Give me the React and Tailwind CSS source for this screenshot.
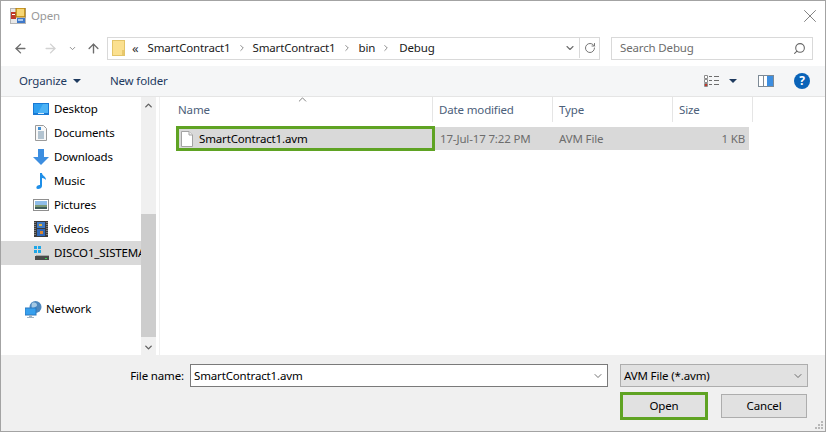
import React from "react";
import { ArrowLeft, ArrowRight, ArrowUp, ChevronDown, ChevronUp, ChevronRight, RotateCw, Search, X } from "lucide-react";

const AppIcon = () => (
	<svg width="16" height="16" viewBox="0 0 16 16" className="shrink-0">
		<rect x="0.5" y="0.5" width="15" height="15" fill="#e8e8e8" stroke="#b5b5b5" />
		<rect x="1" y="4" width="5" height="7" fill="#c0392b" />
		<rect x="2" y="6" width="3" height="1" fill="#fff" />
		<rect x="6" y="0" width="9" height="9" fill="#e8b530" stroke="#a97a14" />
		<rect x="7" y="1" width="7" height="7" fill="#f6d675" />
		<rect x="7" y="10" width="8" height="5" fill="#3f78c9" />
		<rect x="8" y="11" width="5" height="2" fill="#a9c8ee" />
	</svg>
);

const FolderIcon = () => (
	<svg width="13" height="16" viewBox="0 0 13 16" className="shrink-0">
		<rect x="0.5" y="0.5" width="12" height="15" fill="#fbe08f" stroke="#e3c468" />
		<rect x="10" y="10" width="2" height="5" fill="#e8c86c" />
	</svg>
);

const DesktopIcon = () => (
	<svg width="16" height="12" viewBox="0 0 16 12">
		<rect width="16" height="12" fill="#1979d4" />
		<path d="M1 1h14v9H1z" fill="#2fa0f0" />
		<path d="M10 1h5v9H5z" fill="#4db3f5" />
		<rect x="5" y="10" width="6" height="1" fill="#d8ecfb" />
	</svg>
);

const DocumentsIcon = () => (
	<svg width="12" height="16" viewBox="0 0 12 16">
		<path d="M.5.5h8l3 3v12H.5z" fill="#f8f8f8" stroke="#9a9a9a" />
		<rect x="3" y="2" width="3" height="3" fill="#3f8fd6" />
		<path d="M3 7h6M3 9h6M3 11h6M3 13h6" stroke="#6f8fa8" />
	</svg>
);

const DownloadsIcon = () => (
	<svg width="16" height="16" viewBox="0 0 16 16">
		<path d="M5 0h6v8h5l-8 8-8-8h5z" fill="#3d8ee0" />
	</svg>
);

const MusicIcon = () => (
	<svg width="11" height="16" viewBox="0 0 11 16">
		<path d="M4 0h2c0 3 4 3 4 7-1-1-2-2-4-2v8c0 2-2 3-4 3s-2-2-1-3 2-1 3-1z" fill="#1f8fe8" />
	</svg>
);

const PicturesIcon = () => (
	<svg width="16" height="12" viewBox="0 0 16 12">
		<rect x="0.5" y="0.5" width="15" height="11" fill="#fff" stroke="#8f8f8f" />
		<rect x="2" y="2" width="12" height="4" fill="#8fbde8" />
		<rect x="2" y="6" width="12" height="2" fill="#7d9a76" />
		<rect x="2" y="8" width="12" height="2" fill="#3f5d5a" />
	</svg>
);

const VideosIcon = () => (
	<svg width="14" height="16" viewBox="0 0 14 16">
		<rect width="14" height="16" fill="#3b3b3b" />
		<path d="M1 1v14M13 1v14" stroke="#bdbdbd" strokeDasharray="1 1" />
		<rect x="3" y="1" width="8" height="6" fill="#3d78c4" />
		<rect x="3" y="8" width="8" height="7" fill="#2f68b8" />
		<rect x="5" y="3" width="3" height="2" fill="#e5b43c" />
		<rect x="6" y="10" width="3" height="3" fill="#d9842f" />
	</svg>
);

const DriveIcon = () => (
	<svg width="16" height="16" viewBox="0 0 16 16">
		<rect x="1" y="1" width="3" height="3" fill="#1ea7e8" />
		<rect x="5" y="1" width="3" height="3" fill="#1ea7e8" />
		<rect x="1" y="5" width="3" height="3" fill="#1ea7e8" />
		<rect x="5" y="5" width="3" height="3" fill="#1ea7e8" />
		<rect x="3" y="10" width="13" height="1" fill="#a8a8a8" />
		<rect x="2" y="11" width="14" height="4" fill="#4a4a4a" />
		<rect x="12" y="13" width="2" height="1" fill="#36d04a" />
	</svg>
);

const NetworkIcon = () => (
	<svg width="17" height="17" viewBox="0 0 17 17">
		<circle cx="10.5" cy="6" r="6" fill="#4d87bd" />
		<path d="M7 2c3-1 5 0 5 2s-3 2-4 4-2-4-1-6z" fill="#a5c9e4" />
		<rect x="0" y="7" width="11" height="7" fill="#37a0ee" stroke="#2b78c0" />
		<rect x="4" y="14" width="3" height="2" fill="#9fb3c4" />
		<rect x="2" y="16" width="7" height="1" fill="#9fb3c4" />
	</svg>
);

const FileIcon = () => (
	<svg width="12" height="16" viewBox="0 0 12 16" className="shrink-0">
		<path d="M.5.5h7.5l3.500 3.500v11.500H.5z" fill="#fff" stroke="#a3a3a3" />
		<path d="M8 .5v3.500h3.500" fill="#f0f0f0" stroke="#a3a3a3" />
	</svg>
);

const ViewIcon = () => (
	<svg width="16" height="12" viewBox="0 0 16 12">
		<path d="M.5.500h3v3h-3zM.5 4.500h3v3h-3zM.5 8.500h3v3h-3z" fill="#fff" stroke="#8c8c8c" />
		<path d="M5 1.500h3M10 1.500h5M5 5.500h3M10 5.500h5M5 9.500h3M10 9.500h5" stroke="#6d6d6d" />
		<rect x="1" y="9" width="2" height="2" fill="#c0392b" />
	</svg>
);

const PaneIcon = () => (
	<svg width="16" height="12" viewBox="0 0 16 12">
		<rect x="0.500" y="0.500" width="15" height="11" fill="#fff" stroke="#7d8a96" />
		<rect x="9" y="1" width="6" height="10" fill="#3d8ee0" />
		<rect x="5" y="1" width="1" height="10" fill="#7d8a96" />
	</svg>
);

const Caret = () => (
	<span className="block w-0 h-0 border-x-[4px] border-x-transparent border-t-[4px] border-t-[#1e3a5f]" />
);

const Crumb = () => <ChevronRight size={10} strokeWidth={2} className="text-[#777] mx-[6px] shrink-0" />;

const NavItem = ({ icon, label, selected }) => (
	<div className={`h-[24px] flex items-center ${selected ? "bg-[#d9d9d9]" : ""}`}>
		<div className="w-[53px] pl-[32px] pr-[5px] flex justify-center shrink-0">{icon}</div>
		<span className="text-black whitespace-nowrap">{label}</span>
	</div>
);

const ColHead = ({ width, label, first }) => (
	<div style={{ width }} className={`h-[25px] border-r border-[#e5e5e5] flex items-center shrink-0 text-[#4c607a] ${first ? "pl-[2px]" : "pl-[6px]"}`}>
		{label}
	</div>
);

const App = () => {
	return (
		<div className="w-[826px] h-[432px] flex flex-col bg-white border border-[#a3a3a3] text-[11.5px] tracking-[-0.15px] font-['Noto_Sans','Open_Sans',sans-serif] overflow-hidden">
			{/* title bar */}
			<div className="h-[29px] flex items-center pl-[9px] pr-[4px] shrink-0">
				<AppIcon />
				<span className="ml-[5px] text-[#999]">Open</span>
				<X size={22} strokeWidth={1} className="ml-auto text-[#777]" />
			</div>

			{/* nav row */}
			<div className="h-[23px] mt-[7px] flex items-center shrink-0">
				<div className="w-[106px] pl-[12px] flex items-center shrink-0">
					<ArrowLeft size={15} strokeWidth={2.2} className="text-[#6d6d6d]" />
					<ArrowRight size={15} strokeWidth={2.2} className="ml-[15px] text-[#d2d2d2]" />
					<ChevronDown size={9} strokeWidth={2.5} className="ml-[10px] text-[#8a8a8a]" />
					<ArrowUp size={15} strokeWidth={2.2} className="ml-[9px] text-[#6d6d6d]" />
				</div>
				<div className="w-[493px] h-[23px] border border-[#d9d9d9] flex items-center pl-[4px] pb-[1px] text-[#1a1a1a]">
					<FolderIcon />
					<span className="ml-[7px] mr-[9px] text-[#333] text-[13px] leading-none">«</span>
					<span>SmartContract1</span>
					<Crumb />
					<span>SmartContract1</span>
					<Crumb />
					<span className="ml-[1px]">bin</span>
					<Crumb />
					<span className="ml-[2px]">Debug</span>
					<ChevronDown size={12} strokeWidth={2.2} className="ml-auto mr-[3px] text-[#6d6d6d]" />
					<div className="h-full border-l border-[#d9d9d9] w-[20px] flex items-center justify-center">
						<RotateCw size={12} strokeWidth={2} className="text-[#777]" />
					</div>
				</div>
				<div className="w-[202px] h-[23px] ml-[11px] border border-[#d9d9d9] flex items-center pl-[8px] pr-[6px] pb-[1px] text-[#6d6d6d]">
					<span>Search Debug</span>
					<Search size={13} strokeWidth={2} className="ml-auto -scale-x-100 text-[#666]" />
				</div>
			</div>

			{/* toolbar */}
			<div className="h-[31px] mt-[6px] bg-[#f5f6f7] border-b border-[#e5e5e5] flex items-center pl-[18px] text-[#1e3a5f] shrink-0">
				<span>Organize</span>
				<span className="ml-[6px] flex"><Caret /></span>
				<span className="ml-[29px]">New folder</span>
				<div className="ml-auto flex items-center pr-[15px]">
					<ViewIcon />
					<span className="ml-[9px] mr-[21px] flex"><Caret /></span>
					<PaneIcon />
					<div className="ml-[20px] w-[16px] h-[16px] rounded-full bg-[#0a63b8] text-white font-bold text-[12px] leading-none flex items-center justify-center">?</div>
				</div>
			</div>

			{/* content */}
			<div className="flex-1 flex min-h-0">
				<div className="w-[140px] shrink-0 flex flex-col overflow-hidden">
					<NavItem icon={<DesktopIcon />} label="Desktop" />
					<NavItem icon={<DocumentsIcon />} label="Documents" />
					<NavItem icon={<DownloadsIcon />} label="Downloads" />
					<NavItem icon={<MusicIcon />} label="Music" />
					<NavItem icon={<PicturesIcon />} label="Pictures" />
					<NavItem icon={<VideosIcon />} label="Videos" />
					<NavItem icon={<DriveIcon />} label="DISCO1_SISTEMA" selected />
					<div className="h-[32px]" />
					<div className="h-[24px] flex items-center">
						<div className="w-[45px] pl-[24px] shrink-0"><NetworkIcon /></div>
						<span className="text-black">Network</span>
					</div>
				</div>

				{/* scrollbar */}
				<div className="w-[15px] shrink-0 bg-[#f0f0f0] flex flex-col items-center">
					<ChevronUp size={11} strokeWidth={3} className="mt-[3px] text-[#606060]" />
					<div className="w-full h-[123px] mt-[103px] bg-[#cdcdcd]" />
					<ChevronDown size={11} strokeWidth={3} className="mt-[5px] text-[#606060]" />
				</div>

				{/* file list */}
				<div className="flex-1 ml-[3px] border-l border-[#f0f0f0] pl-[16px] min-w-0">
					<div className="relative flex">
						<ChevronUp size={13} strokeWidth={1.5} className="absolute left-[120px] -top-[4px] text-[#666]" />
						<ColHead width={257} label="Name" first />
						<ColHead width={120} label="Date modified" />
						<ColHead width={120} label="Type" />
						<ColHead width={80} label="Size" />
					</div>
					<div className="h-[25px] mt-[4px] flex items-center">
						<div className="w-[259px] h-[25px] border-[3px] border-[#5fa323] bg-[#d9d9d9] flex items-center pl-[2px] shrink-0">
							<FileIcon />
							<span className="ml-[6px] text-black">SmartContract1.avm</span>
						</div>
						<div className="w-[314px] h-[23px] bg-[#d9d9d9] flex items-center text-[#6d6d6d]">
							<span className="w-[124px] pl-[5px]">17-Jul-17 7:22 PM</span>
							<span className="w-[120px]">AVM File</span>
							<span className="w-[66px] text-right">1 KB</span>
						</div>
					</div>
				</div>
			</div>

			{/* footer */}
			<div className="relative h-[76px] bg-[#f0f0f0] shrink-0 flex flex-col items-end pt-[9px] pr-[17px]">
				<div className="flex items-center">
					<span className="text-black mr-[6px]">File name:</span>
					<div className="w-[418px] h-[23px] bg-white border border-[#7a7a7a] flex items-center pl-[3px] text-black">
						<span>SmartContract1.avm</span>
						<ChevronDown size={12} strokeWidth={1.5} className="ml-auto mr-[3px] text-[#444]" />
					</div>
					<div className="w-[188px] h-[23px] ml-[12px] bg-[#e1e1e1] border border-[#adadad] flex items-center pl-[3px] text-black">
						<span>AVM File (*.avm)</span>
						<ChevronDown size={12} strokeWidth={1.5} className="ml-auto mr-[3px] text-[#444]" />
					</div>
				</div>
				<div className="flex items-center mt-[5px]">
					<button className="w-[88px] h-[28px] bg-[#e1e1e1] border-[3px] border-[#5fa323] text-black">Open</button>
					<button className="w-[86px] h-[24px] ml-[13px] mr-[1px] bg-[#e1e1e1] border border-[#adadad] text-black">Cancel</button>
				</div>
				<svg width="10" height="10" viewBox="0 0 10 10" className="absolute right-[1px] bottom-[1px]">
					<path d="M7 1h2v2H7zM4 4h2v2H4zM7 4h2v2H7zM1 7h2v2H1zM4 7h2v2H4zM7 7h2v2H7z" fill="#b8b8b8" />
				</svg>
			</div>
		</div>
	);
};

export default App;
